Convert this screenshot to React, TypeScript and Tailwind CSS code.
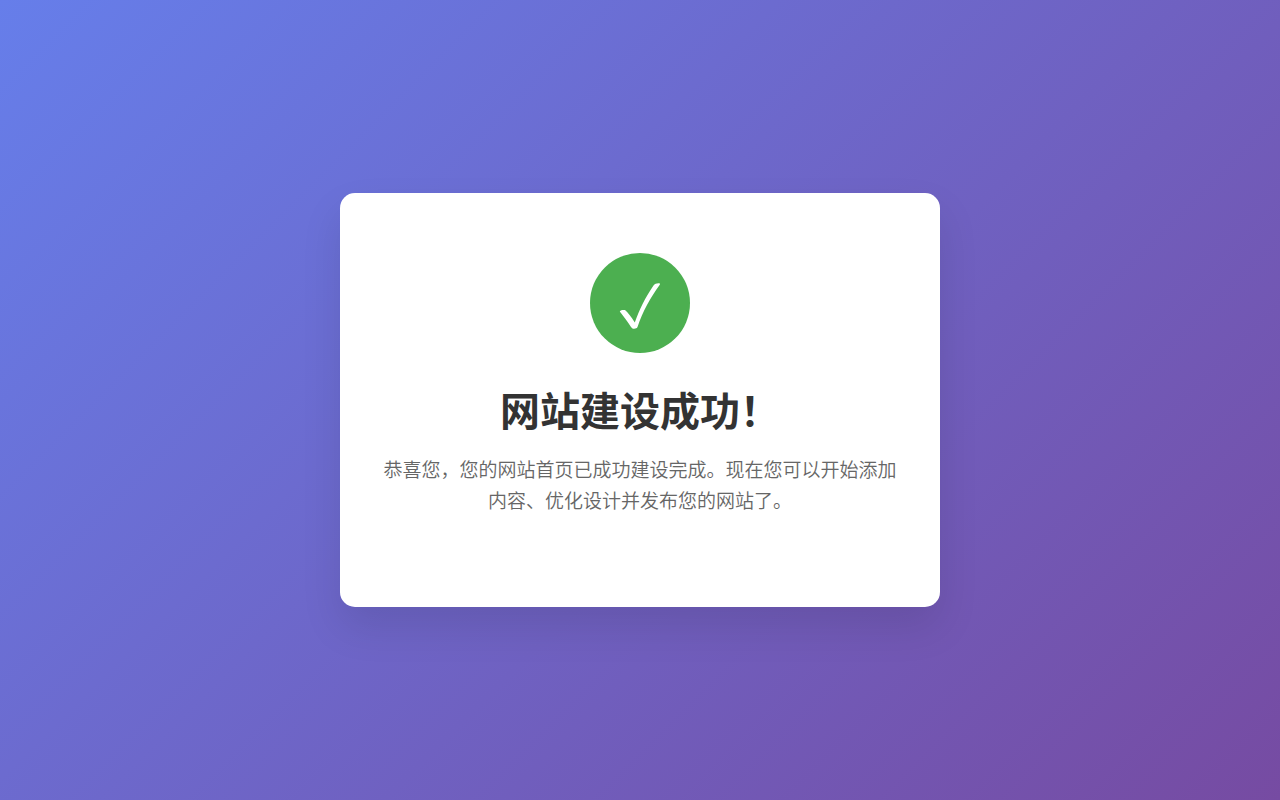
import React from "react";

const App = () => {
  return (
    <main className="flex min-h-screen items-center justify-center bg-[linear-gradient(135deg,#667eea_0%,#764ba2_100%)] p-5 font-['Noto_Sans_CJK_SC',sans-serif]">
      <section className="w-full max-w-[600px] rounded-[15px] bg-white px-10 pt-[60px] pb-[92px] text-center shadow-[0_20px_40px_rgba(0,0,0,0.1)]">
        <div className="mx-auto mb-[30px] flex size-[100px] items-center justify-center rounded-full bg-[#4caf50]">
          <svg
            viewBox="0 0 100 100"
            className="size-full"
            fill="#fff"
            role="img"
            aria-label="成功"
          >
            <path d="M29.8 58.6 C29.8 57.2 32.5 56.6 35 57 C37.5 59 41.5 64 44.8 69.5 C49 57.5 55.5 44 63.5 32.5 C64.8 30.8 67 30 69.5 30.3 C70.2 30.8 70.1 31.4 69.6 32.1 C60.5 44.5 52.5 59 47.6 73.8 C47 75.6 45 75.9 43.2 75.7 C42.2 75.5 41.6 75 41 74.1 C37.5 68.8 34 64 29.8 58.6 Z" />
          </svg>
        </div>
        <h1 className="mb-[18px] text-[40px] leading-[52px] font-bold text-[#333]">
          网站建设成功！
        </h1>
        <p className="text-[19px] leading-[31px] font-[350] text-[#666]">
          恭喜您，您的网站首页已成功建设完成。现在您可以开始添加内容、优化设计并发布您的网站了。
        </p>
      </section>
    </main>
  );
};

export default App;
